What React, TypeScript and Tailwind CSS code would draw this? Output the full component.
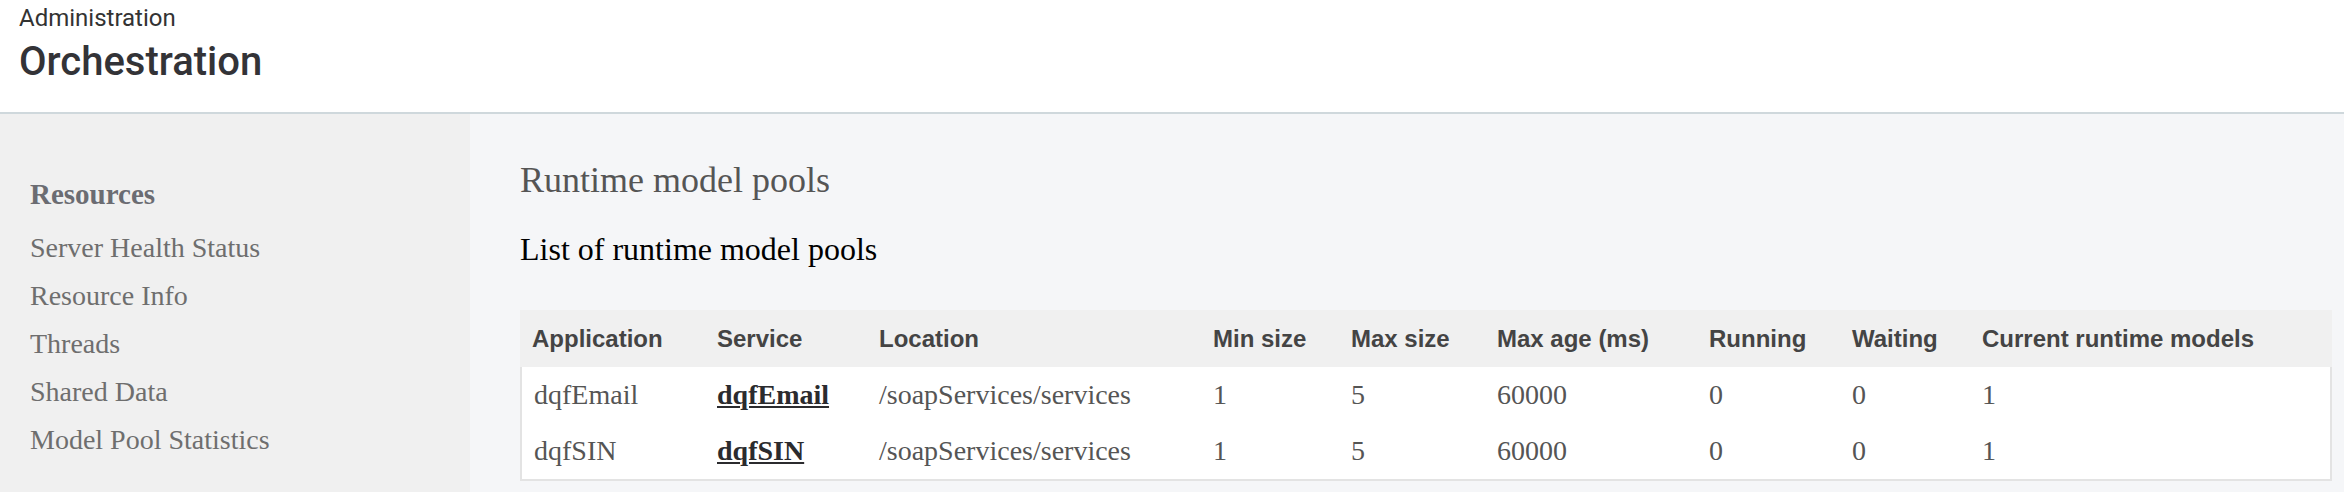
import React from 'react';

const serif = { fontFamily: '"Liberation Serif", "Times New Roman", serif' };

const links = ['Server Health Status', 'Resource Info', 'Threads', 'Shared Data', 'Model Pool Statistics'];

const columns = [
    { label: 'Application', w: 'w-[185px]' },
    { label: 'Service', w: 'w-[162px]' },
    { label: 'Location', w: 'w-[334px]' },
    { label: 'Min size', w: 'w-[138px]' },
    { label: 'Max size', w: 'w-[146px]' },
    { label: 'Max age (ms)', w: 'w-[212px]' },
    { label: 'Running', w: 'w-[143px]' },
    { label: 'Waiting', w: 'w-[130px]' },
    { label: 'Current runtime models', w: 'w-[362px]' },
];

const pools = [
    { app: 'dqfEmail', service: 'dqfEmail', location: '/soapServices/services', min: 1, max: 5, age: 60000, running: 0, waiting: 0, current: 1 },
    { app: 'dqfSIN', service: 'dqfSIN', location: '/soapServices/services', min: 1, max: 5, age: 60000, running: 0, waiting: 0, current: 1 },
];

const App = () => {
    return (
        <div className="min-h-screen w-full bg-[#f5f6f8] flex flex-col">
            {/* Page header */}
            <header
                className="bg-white border-b-2 border-[#cfd8dc] pl-[19px] pt-[6px] h-[114px]"
                style={{ fontFamily: 'Roboto, "Liberation Sans", sans-serif' }}
            >
                <div className="text-[24px] leading-[24px] text-[#333]">Administration</div>
                <h1 className="mt-[12px] text-[40px] leading-[40px] font-medium text-[#333337]">Orchestration</h1>
            </header>

            <div className="flex flex-1">
                {/* Sidebar */}
                <nav className="w-[470px] shrink-0 bg-[#f0f0f0] pl-[30px] pt-[60px]" style={serif}>
                    <div className="text-[29px] leading-[40px] font-bold text-[#6b6c72] mb-[10px]">Resources</div>
                    <ul>
                        {links.map((l) => (
                            <li key={l} className="text-[28px] leading-[48px] text-[#6e6e6e]">
                                {l}
                            </li>
                        ))}
                    </ul>
                </nav>

                {/* Main content */}
                <main className="flex-1 pl-[50px] pr-[12px] pt-[44px]" style={serif}>
                    <h2 className="text-[36px] leading-[44px] text-[#555]">Runtime model pools</h2>
                    <h3 className="mt-[27px] text-[32px] leading-[40px] text-black">List of runtime model pools</h3>

                    <table className="mt-[41px] w-[1812px] table-fixed border-separate border-spacing-0">
                        <thead>
                            <tr className="bg-[#f0f0f0]">
                                {columns.map((c) => (
                                    <th
                                        key={c.label}
                                        className={`${c.w} h-[57px] pl-[12px] text-left align-middle text-[24px] font-bold text-[#444]`}
                                        style={{ fontFamily: '"Liberation Sans", Arial, sans-serif' }}
                                    >
                                        {c.label}
                                    </th>
                                ))}
                            </tr>
                        </thead>
                        <tbody className="bg-white">
                            {pools.map((p, i) => {
                                const last = i === pools.length - 1;
                                const cells = [p.app, p.service, p.location, p.min, p.max, p.age, p.running, p.waiting, p.current];
                                return (
                                    <tr key={p.app}>
                                        {cells.map((v, j) => (
                                            <td
                                                key={j}
                                                className={[
                                                    'pl-[12px] align-middle text-[28px] text-[#555] border-[#e3e3e3]',
                                                    last ? 'h-[58px] border-b-2' : 'h-[56px]',
                                                    j === 0 ? 'border-l-2 pl-[10px]' : '',
                                                    j === cells.length - 1 ? 'border-r-2' : '',
                                                ].join(' ')}
                                            >
                                                {j === 1 ? (
                                                    <a href="#" className="font-bold text-[#2b2b2e] underline">
                                                        {v}
                                                    </a>
                                                ) : (
                                                    v
                                                )}
                                            </td>
                                        ))}
                                    </tr>
                                );
                            })}
                        </tbody>
                    </table>
                </main>
            </div>
        </div>
    );
};

export default App;
